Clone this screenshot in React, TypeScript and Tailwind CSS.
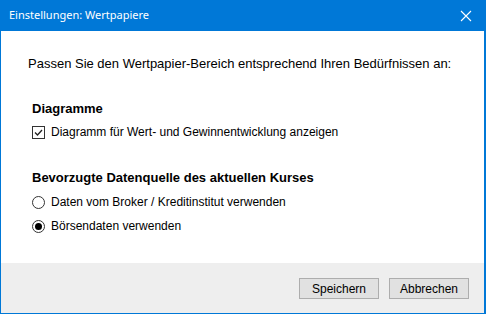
export default function App() {
  return (
    <div className="w-[486px] h-[314px] flex flex-col bg-[#0078d7] font-['Liberation_Sans',Arial,sans-serif] text-[13px] text-black">
      {/* title bar */}
      <div className="h-[31px] flex items-center justify-between pl-[9px] pr-[12px] text-white">
        <span className="font-['Noto_Sans',sans-serif] text-[11px]">Einstellungen: Wertpapiere</span>
        <svg width="12" height="12" viewBox="0 0 12 12" className="mr-[2px]">
          <path d="M1 1 L11 11 M11 1 L1 11" stroke="white" strokeWidth="1.1" />
        </svg>
      </div>

      <div className="flex-1 flex flex-col ml-[1px] mr-[2px] mb-[1px]">
        {/* content */}
        <div className="h-[232px] bg-white pl-[27px] pt-[25px]">
          <p className="leading-[16px]">Passen Sie den Wertpapier-Bereich entsprechend Ihren Bedürfnissen an:</p>

          <div className="pl-[4px] mt-[29px]">
            <div className="font-bold leading-[16px]">Diagramme</div>
            <label className="flex items-center mt-[8px] h-[14px] text-[12px]">
              <span className="w-[13px] h-[13px] border border-[#333] bg-white flex items-center justify-center">
                <svg width="11" height="11" viewBox="0 0 11 11">
                  <path d="M2 5.5 L4.5 8 L9 3" fill="none" stroke="#222" strokeWidth="1.3" />
                </svg>
              </span>
              <span className="ml-[6px]">Diagramm für Wert- und Gewinnentwicklung anzeigen</span>
            </label>

            <div className="font-bold leading-[16px] mt-[31px]">Bevorzugte Datenquelle des aktuellen Kurses</div>
            <label className="flex items-center mt-[9px] h-[14px] text-[12px]">
              <span className="w-[13px] h-[13px] rounded-full border border-[#333] bg-white" />
              <span className="ml-[6px]">Daten vom Broker / Kreditinstitut verwenden</span>
            </label>
            <label className="flex items-center mt-[10px] h-[14px] text-[12px]">
              <span className="w-[13px] h-[13px] rounded-full border border-[#333] bg-white flex items-center justify-center">
                <span className="w-[7px] h-[7px] rounded-full bg-black" />
              </span>
              <span className="ml-[6px]">Börsendaten verwenden</span>
            </label>
          </div>
        </div>

        {/* footer */}
        <div className="flex-1 bg-[#eeeeee] flex justify-end items-start pt-[15px] pr-[15px] gap-[10px]">
          <button className="w-[80px] h-[21px] border border-[#adadad] bg-[#e1e1e1] text-[12px] leading-none">Speichern</button>
          <button className="w-[80px] h-[21px] border border-[#adadad] bg-[#e1e1e1] text-[12px] leading-none">Abbrechen</button>
        </div>
      </div>
    </div>
  );
}
